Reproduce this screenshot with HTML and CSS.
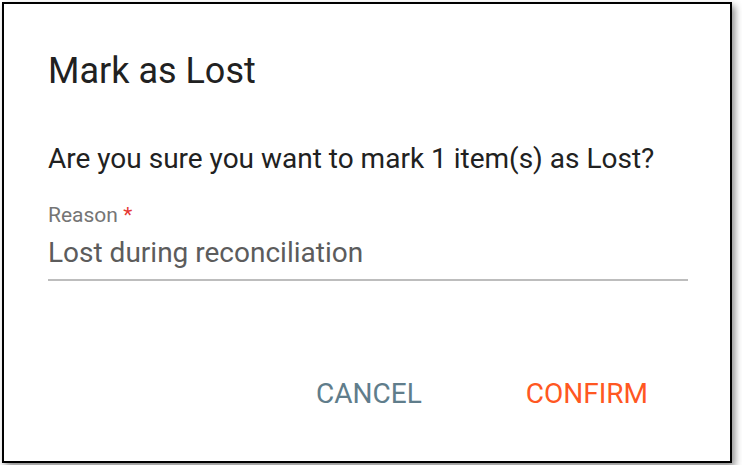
FILE: index.html
```html
<!DOCTYPE html>
<html lang="en">
<head>
<meta charset="utf-8">
<title>Mark as Lost</title>
<link rel="stylesheet" href="styles.css">
</head>
<body>
<div class="stage">
  <div class="dialog">
    <h2 class="title">Mark as Lost</h2>
    <p class="message">Are you sure you want to mark 1 item(s) as Lost?</p>
    <div class="field">
      <label class="label">Reason <span class="req">*</span></label>
      <div class="input">Lost during reconciliation</div>
    </div>
    <div class="actions">
      <button class="btn cancel">CANCEL</button>
      <button class="btn confirm">CONFIRM</button>
    </div>
  </div>
</div>
</body>
</html>
```

FILE: styles.css
```css
html, body {
  margin: 0;
  padding: 0;
  background: #fff;
}
.stage {
  padding: 2px;
}
.dialog {
  box-sizing: border-box;
  width: 730px;
  height: 461px;
  border: 2px solid #000;
  background: #fff;
  box-shadow: 3px 4px 7px rgba(0,0,0,0.45);
  padding: 45px 42px 0 44px;
  font-family: Roboto, "Liberation Sans", sans-serif;
  display: flex;
  flex-direction: column;
}
.title {
  margin: 0;
  font-size: 36px;
  line-height: 44px;
  font-weight: 400;
  color: #212121;
}
.message {
  margin: 50px 0 0;
  font-size: 28px;
  line-height: 32px;
  color: #212121;
}
.field {
  margin-top: 28px;
  display: flex;
  flex-direction: column;
}
.label {
  font-size: 21px;
  line-height: 24px;
  color: #757575;
}
.req {
  color: #e53935;
}
.input {
  margin-top: 10px;
  font-size: 28px;
  line-height: 32px;
  color: #5c5c5c;
  padding-bottom: 10px;
  border-bottom: 2px solid #bdbdbd;
}
.actions {
  margin-top: 97px;
  display: flex;
  justify-content: flex-end;
  gap: 104px;
  padding-right: 40px;
}
.btn {
  background: none;
  border: none;
  padding: 0;
  font-family: Roboto, "Liberation Sans", sans-serif;
  font-size: 28px;
  line-height: 32px;
  cursor: pointer;
}
.cancel { color: #607d8b; }
.confirm { color: #ff5722; }
```
